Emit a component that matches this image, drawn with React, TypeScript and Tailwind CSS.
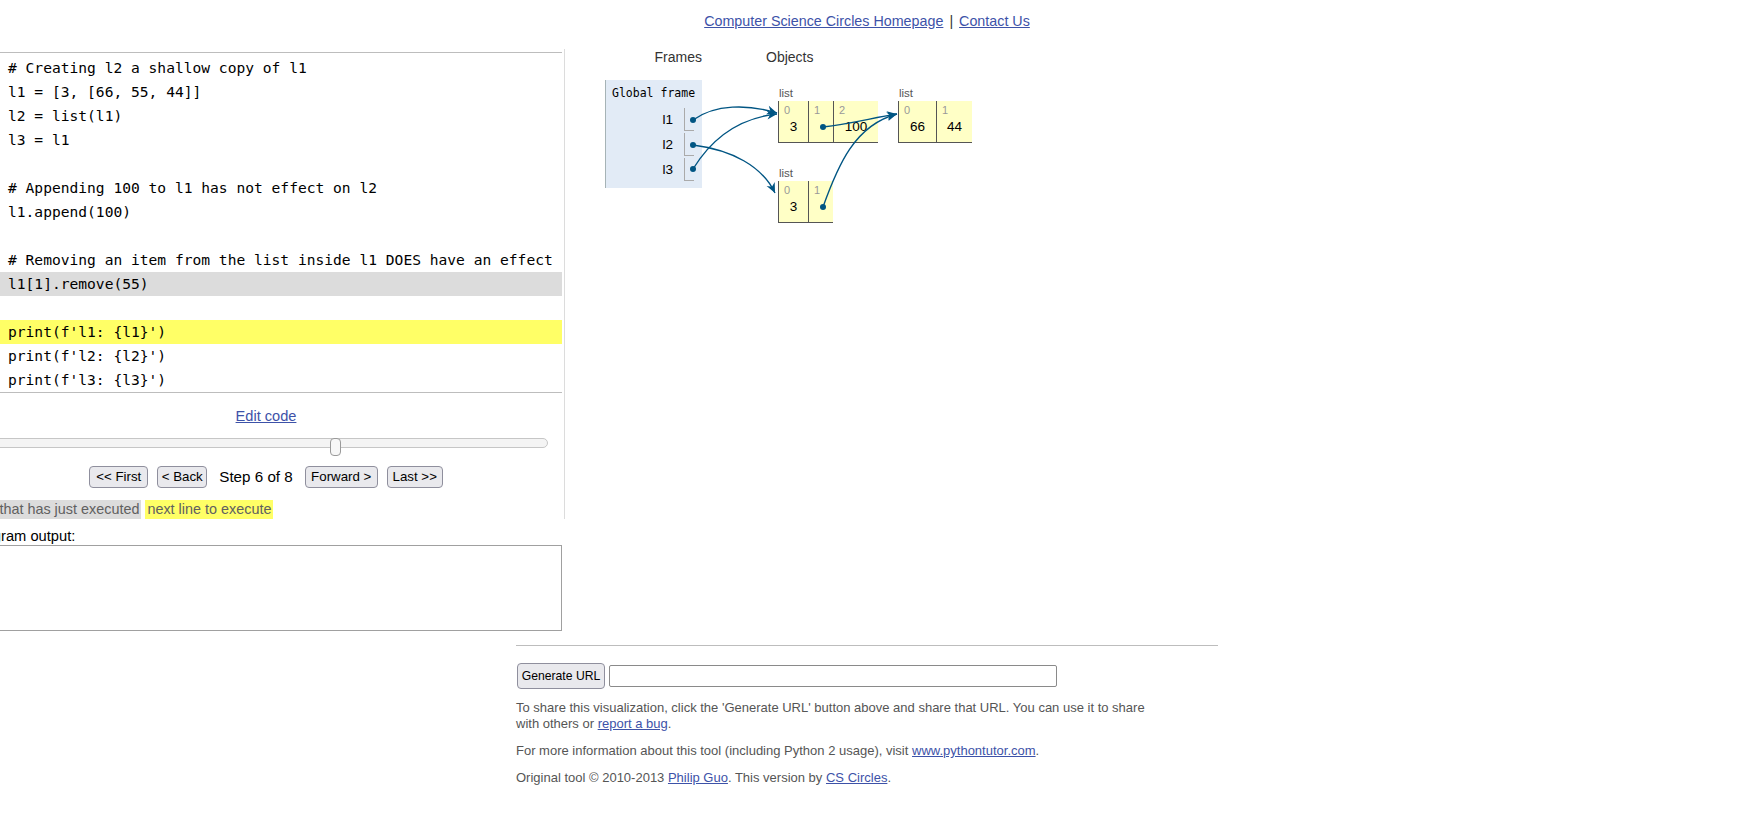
import React from "react";

const codeLines: { text: string; bg?: string }[] = [
  { text: "# Creating l2 a shallow copy of l1" },
  { text: "l1 = [3, [66, 55, 44]]" },
  { text: "l2 = list(l1)" },
  { text: "l3 = l1" },
  { text: "" },
  { text: "# Appending 100 to l1 has not effect on l2" },
  { text: "l1.append(100)" },
  { text: "" },
  { text: "# Removing an item from the list inside l1 DOES have an effect" },
  { text: "l1[1].remove(55)", bg: "gray" },
  { text: "" },
  { text: "print(f'l1: {l1}')", bg: "yellow" },
  { text: "print(f'l2: {l2}')" },
  { text: "print(f'l3: {l3}')" },
];

type Arr = [number, number, number, number, number, number, number, number];
const arrows: Arr[] = [
  [693, 120, 715, 104, 748, 104, 777, 113],
  [693, 169, 712, 138, 740, 118, 777, 114],
  [693, 145, 732, 150, 762, 166, 775, 193],
  [823, 127, 850, 124, 872, 118, 897, 114],
  [823, 207, 838, 165, 855, 125, 897, 114],
];
const dots: [number, number][] = [
  [693, 120],
  [693, 145],
  [693, 169],
  [823, 127],
  [823, 207],
];

function head(a: Arr) {
  const [, , , , c2x, c2y, x, y] = a;
  let dx = x - c2x;
  let dy = y - c2y;
  const l = Math.hypot(dx, dy) || 1;
  dx /= l;
  dy /= l;
  const len = 10;
  const hw = 4.5;
  const bx = x - dx * len;
  const by = y - dy * len;
  const px = -dy;
  const py = dx;
  const fx = x - dx * 7;
  const fy = y - dy * 7;
  return `M${x},${y} L${bx + px * hw},${by + py * hw} L${fx},${fy} L${bx - px * hw},${by - py * hw} Z`;
}

function Cell({ w, idx, val }: { w: number; idx: string; val?: string }) {
  return (
    <div
      className="h-[42px] border-l border-b border-[#555] bg-[#ffffc6] flex flex-col shrink-0"
      style={{ width: w }}
    >
      <div className="pl-[5px] pt-[3px] text-[11px] leading-[12px] text-[#999]">{idx}</div>
      <div className="mt-[3px] text-center text-[13.5px] leading-[16px] text-black">{val ?? "\u00a0"}</div>
    </div>
  );
}

function VarRow({ name }: { name: string }) {
  return (
    <div className="flex items-center justify-end pr-[8px] h-[23px] mb-[2px]">
      <span className="text-[13.5px] leading-[16px] text-black">{name}</span>
      <div className="ml-[11px] w-[10px] h-[23px] border-l border-b border-[#aaa]" />
    </div>
  );
}

const btn =
  "h-[22px] rounded-[4px] border border-[#8f8f9d] bg-[#e9e9ed] text-[13.3px] leading-[20px] text-black text-center";

export default function App() {
  return (
    <div className="w-[1734px] font-['Liberation_Sans',Arial,sans-serif] text-black bg-white min-h-[819px]">
      {/* top links */}
      <div className="h-[49px] pt-[13px] text-center text-[14.3px] leading-[17px]">
        <a className="text-[#3d52a8] underline">Computer Science Circles Homepage</a>
        <span className="mx-[6px] text-[#333]">|</span>
        <a className="text-[#3d52a8] underline">Contact Us</a>
      </div>

      {/* middle row */}
      <div className="flex ml-[-30px]">
        {/* left column */}
        <div className="w-[595px] shrink-0 border-r border-[#dcdcdc] pr-[2px]">
          <div className="mt-[3px] border-y border-[#bdbdbd] pt-[3px] font-['DejaVu_Sans_Mono',monospace] text-[14.6px] text-black">
            {codeLines.map((l, i) => (
              <div
                key={i}
                className={
                  "h-[24px] leading-[24px] pl-[38px] whitespace-pre " +
                  (l.bg === "gray" ? "bg-[#dcdcdc]" : l.bg === "yellow" ? "bg-[#ffff66]" : "")
                }
              >
                {l.text || "\u00a0"}
              </div>
            ))}
          </div>

          <div className="mt-[14px] h-[18px] leading-[18px] text-center text-[14.6px]">
            <a className="text-[#3d52a8] underline">Edit code</a>
          </div>

          <div className="relative mt-[13px] mx-[14px] h-[18px]">
            <div className="mt-[3px] h-[10px] rounded-[5px] border border-[#c6c6c6] bg-[#f4f4f4]" />
            <div className="absolute left-[346px] top-0 w-[11px] h-[18px] rounded-[4px] border border-[#9a9a9a] bg-[#f7f7f7]" />
          </div>

          <div className="mt-[10px] h-[22px] flex items-center justify-center">
            <button className={btn + " w-[59px]"}>&lt;&lt; First</button>
            <button className={btn + " w-[50px] ml-[9px]"}>&lt; Back</button>
            <span className="mx-[12px] text-[15.2px] leading-[20px] text-black">Step 6 of 8</span>
            <button className={btn + " w-[73px]"}>Forward &gt;</button>
            <button className={btn + " w-[56px] ml-[9px]"}>Last &gt;&gt;</button>
          </div>

          <div className="mt-[12px] h-[19px] flex text-[14.4px] leading-[19px] text-[#606060]">
            <span className="ml-[1px] px-[2px] bg-[#dcdcdc]">line that has just executed</span>
            <span className="ml-[4px] px-[2px] bg-[#ffff66]">next line to execute</span>
          </div>
        </div>

        {/* right column: diagram */}
        <div className="relative w-[600px] h-[469px] shrink-0">
          <div className="flex h-[17px] text-[14px] leading-[17px] text-[#333]">
            <div className="w-[137px] text-right">Frames</div>
            <div className="ml-[64px]">Objects</div>
          </div>

          <div className="mt-[14px] flex items-start">
            <div className="ml-[40px] w-[97px] h-[108px] border-l border-[#a6b3b6] bg-[#e2ebf6] pt-[6px]">
              <div className="pl-[6px] h-[14px] leading-[14px] text-[11.5px] font-['DejaVu_Sans_Mono',monospace] text-black">
                Global frame
              </div>
              <div className="mt-[8px]">
                <VarRow name="l1" />
                <VarRow name="l2" />
                <VarRow name="l3" />
              </div>
            </div>

            <div className="ml-[76px] mt-[6px] flex flex-col">
              <div className="flex items-start gap-[20px]">
                <div>
                  <div className="h-[15px] leading-[15px] pl-[1px] text-[11.5px] text-[#555]">list</div>
                  <div className="flex">
                    <Cell w={30} idx="0" val="3" />
                    <Cell w={25} idx="1" />
                    <Cell w={45} idx="2" val="100" />
                  </div>
                </div>
                <div>
                  <div className="h-[15px] leading-[15px] pl-[1px] text-[11.5px] text-[#555]">list</div>
                  <div className="flex">
                    <Cell w={38} idx="0" val="66" />
                    <Cell w={36} idx="1" val="44" />
                  </div>
                </div>
              </div>
              <div className="mt-[23px]">
                <div className="h-[15px] leading-[15px] pl-[1px] text-[11.5px] text-[#555]">list</div>
                <div className="flex">
                  <Cell w={30} idx="0" val="3" />
                  <Cell w={25} idx="1" />
                </div>
              </div>
            </div>
          </div>

          <svg
            className="absolute left-0 top-0 pointer-events-none overflow-visible"
            width={600}
            height={300}
          >
            <g transform="translate(-565,-49)">
              {arrows.map((a, i) => (
                <g key={i}>
                  <path
                    d={`M${a[0]},${a[1]} C${a[2]},${a[3]} ${a[4]},${a[5]} ${a[6]},${a[7]}`}
                    fill="none"
                    stroke="#005583"
                    strokeWidth={1.4}
                  />
                  <path d={head(a)} fill="#005583" />
                </g>
              ))}
              {dots.map(([x, y], i) => (
                <circle key={i} cx={x} cy={y} r={3} fill="#005583" />
              ))}
            </g>
          </svg>
        </div>
      </div>

      {/* program output */}
      <div className="ml-[-30px] w-[592px]">
        <div className="mt-[8px] h-[18px] leading-[18px] text-[14.7px] text-black">Program output:</div>
        <div className="h-[86px] border border-[#a0a0a0] bg-white" />
      </div>

      {/* bottom */}
      <div className="w-[702px] mx-auto mt-[14px]">
        <div className="h-px bg-[#bdbdbd]" />
        <div className="mt-[17px] flex items-center">
          <button className="ml-[1px] w-[88px] h-[26px] rounded-[4px] border border-[#8f8f9d] bg-[#e9e9ed] text-[12.2px] text-black">
            Generate URL
          </button>
          <div className="ml-[4px] w-[448px] h-[22px] rounded-[2px] border border-[#8a8a8a] bg-white" />
        </div>
        <div className="mt-[11px] text-[13px] leading-[16px] text-[#555] whitespace-nowrap">
          To share this visualization, click the 'Generate URL' button above and share that URL. You can use it to share
          <br />
          with others or <a className="text-[#3d52a8] underline">report a bug</a>.
        </div>
        <div className="mt-[11px] text-[13px] leading-[16px] text-[#555] whitespace-nowrap">
          For more information about this tool (including Python 2 usage), visit{" "}
          <a className="text-[#3d52a8] underline">www.pythontutor.com</a>.
        </div>
        <div className="mt-[11px] text-[13px] leading-[16px] text-[#555] whitespace-nowrap">
          Original tool © 2010-2013 <a className="text-[#3d52a8] underline">Philip Guo</a>. This version by{" "}
          <a className="text-[#3d52a8] underline">CS Circles</a>.
        </div>
      </div>
    </div>
  );
}
